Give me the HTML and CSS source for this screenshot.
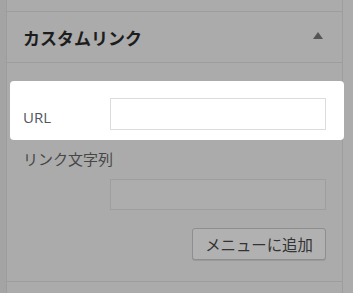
FILE: index.html
```html
<!DOCTYPE html>
<html lang="ja">
<head>
<meta charset="utf-8">
<link rel="stylesheet" href="styles.css">
</head>
<body>
<div class="page">
  <div class="strip"></div>
  <div class="panel">
    <div class="prev"></div>
    <div class="head">
      <h3 class="title">カスタムリンク</h3>
      <svg class="arrow" width="10" height="7" viewBox="0 0 10 7"><path d="M5 0 L10 7 L0 7 Z" fill="#555"/></svg>
    </div>
    <div class="body">
      <div class="row hl">
        <label class="lab">URL</label>
        <div class="inp white"></div>
      </div>
      <div class="lab2">リンク文字列</div>
      <div class="row2">
        <div class="inp"></div>
      </div>
      <div class="actions">
        <div class="btn">メニューに追加</div>
      </div>
    </div>
    <div class="next"></div>
  </div>
</div>
</body>
</html>
```
FILE: styles.css
```css
html, body { margin: 0; padding: 0; }
body {
  background: #ababab;
  font-family: "Noto Sans CJK JP", "Open Sans", sans-serif;
  width: 353px; height: 293px; overflow: hidden;
}
.page { display: flex; height: 293px; }
.strip { width: 6px; background: #a4a4a4; flex: none; }
.panel {
  width: 335px;
  border-left: 1px solid #9d9d9d;
  border-right: 1px solid #9d9d9d;
  background: #ababab;
  display: flex; flex-direction: column;
}
.prev { height: 11px; border-bottom: 1px solid #9d9d9d; }
.head {
  height: 50px;
  border-bottom: 1px solid #9d9d9d;
  display: flex; align-items: center; justify-content: space-between;
  padding: 0 19px 0 16px;
}
.title {
  margin: 0; font-size: 17px; font-weight: 700; color: #1d1d1d;
  letter-spacing: 0; line-height: 1;
}
.arrow { margin-top: -3px; }
.body { padding: 18px 0 0 0; height: 219px; border-bottom: 1px solid #9d9d9d; box-sizing: border-box; }
.row { display: flex; align-items: center; }
.hl {
  background: #fff; border-radius: 4px;
  margin: 0 -2px 0 3px;
  height: 59px; box-sizing: border-box;
  padding: 7px 17px 0 13px;
}
.lab { width: 87px; font-family: "Open Sans", "Noto Sans", sans-serif; font-size: 15px; color: #50575e; margin-top: 6px; }
.inp {
  width: 216px; height: 32px; box-sizing: border-box;
  border: 1px solid #dcdcdc; background: #fff;
}
.row2 .inp { border-color: #9e9e9e; background: #adadad; height: 31px; }
.lab2 { margin: 8px 0 0 16px; font-size: 15px; color: #474747; line-height: 22px; height: 22px; }
.row2 { padding: 9px 0 0 103px; }
.actions { display: flex; justify-content: flex-end; padding: 18px 16px 0 0; }
.btn {
  width: 134px; height: 32px; box-sizing: border-box;
  border: 1px solid #8e8e8e; border-radius: 3px;
  background: #b1b1b1; box-shadow: 0 1px 0 #9a9a9a;
  font-size: 15.4px; color: #333; display: flex; align-items: center; justify-content: center;
}
.next { flex: 1; }
```
